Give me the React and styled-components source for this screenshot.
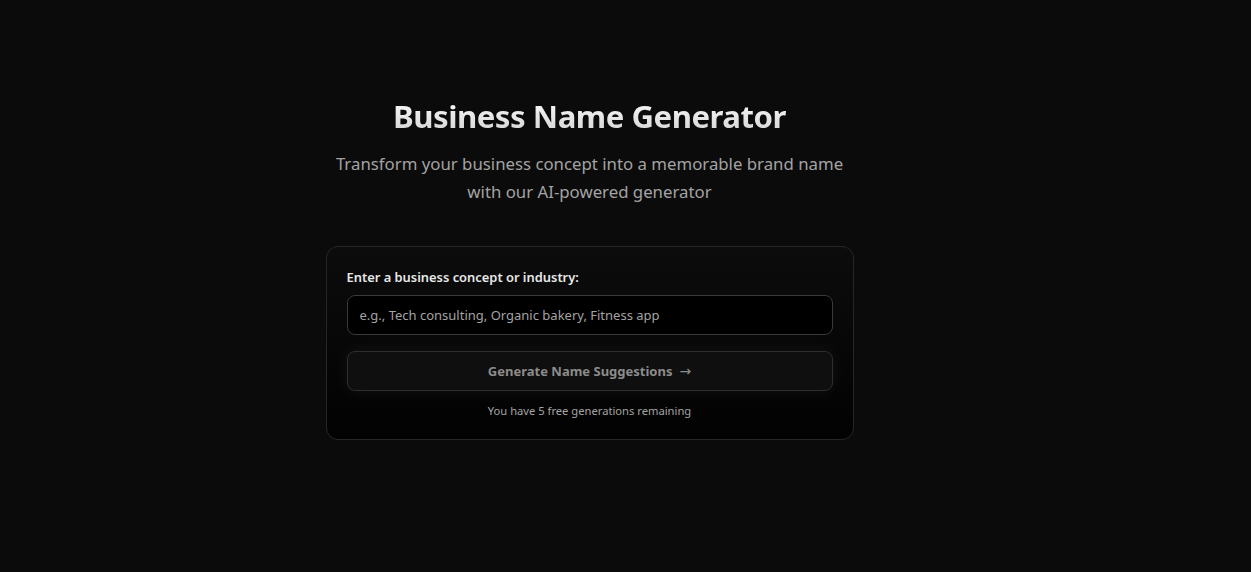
import React, { useState } from "react";
import styled, { createGlobalStyle } from "styled-components";

const Global = createGlobalStyle`
  html, body { margin: 0; padding: 0; background: #0b0b0b; }
  body { font-family: "Noto Sans", "Open Sans", sans-serif; color: #e5e5e5; }
  * { box-sizing: border-box; }
`;

const Page = styled.main`
  min-height: 572px;
  display: flex;
  flex-direction: column;
  align-items: center;
  padding: 95px 72px 0 0;
`;

const Title = styled.h1`
  margin: 0;
  font-size: 31.2px;
  line-height: 42px;
  font-weight: 700;
  letter-spacing: -0.5px;
  background: linear-gradient(180deg, #ffffff 0%, #d0d0d0 100%);
  -webkit-background-clip: text;
  background-clip: text;
  color: transparent;
`;

const Subtitle = styled.p`
  margin: 13px 0 0;
  max-width: 540px;
  text-align: center;
  font-size: 16.8px;
  line-height: 28px;
  color: #a3a3a3;
`;

const Card = styled.section`
  margin-top: 40px;
  width: 528px;
  padding: 20px;
  border: 1px solid #262626;
  border-radius: 12px;
  background: linear-gradient(180deg, #0c0c0c 0%, #020202 100%);
  display: flex;
  flex-direction: column;
`;

const Label = styled.label`
  font-size: 12.9px;
  line-height: 20px;
  font-weight: 600;
  color: #e8e8e8;
  margin-bottom: 8px;
`;

const Input = styled.input`
  height: 40px;
  width: 100%;
  border: 1px solid #3a3a3a;
  border-radius: 8px;
  background: #000;
  padding: 0 12px;
  font-family: inherit;
  font-size: 13px;
  color: #e5e5e5;
  outline: none;
  &::placeholder { color: #a3a3a3; }
`;

const Button = styled.button`
  margin-top: 16px;
  height: 40px;
  width: 100%;
  border: 1px solid #2e2e2e;
  border-radius: 8px;
  background: #0f0f0f;
  box-shadow: 0 0 18px rgba(255, 255, 255, 0.06);
  color: #8c8c8c;
  font-family: inherit;
  font-size: 13px;
  font-weight: 700;
  display: flex;
  align-items: center;
  justify-content: center;
  gap: 7px;
  cursor: not-allowed;
`;

const Arrow = styled.span`
  font-family: "DejaVu Sans", sans-serif;
  font-size: 14px;
  font-weight: 400;
`;

const Note = styled.p`
  margin: 12px 0 0;
  text-align: center;
  font-size: 11.2px;
  line-height: 16px;
  color: #a3a3a3;
`;

export default function App() {
  const [value, setValue] = useState("");
  return (
    <>
      <Global />
      <Page>
        <Title>Business Name Generator</Title>
        <Subtitle>
          Transform your business concept into a memorable brand name with our AI-powered generator
        </Subtitle>
        <Card>
          <Label htmlFor="concept">Enter a business concept or industry:</Label>
          <Input
            id="concept"
            value={value}
            onChange={(e) => setValue(e.target.value)}
            placeholder="e.g., Tech consulting, Organic bakery, Fitness app"
          />
          <Button disabled={!value}>
            Generate Name Suggestions <Arrow>→</Arrow>
          </Button>
          <Note>You have 5 free generations remaining</Note>
        </Card>
      </Page>
    </>
  );
}
